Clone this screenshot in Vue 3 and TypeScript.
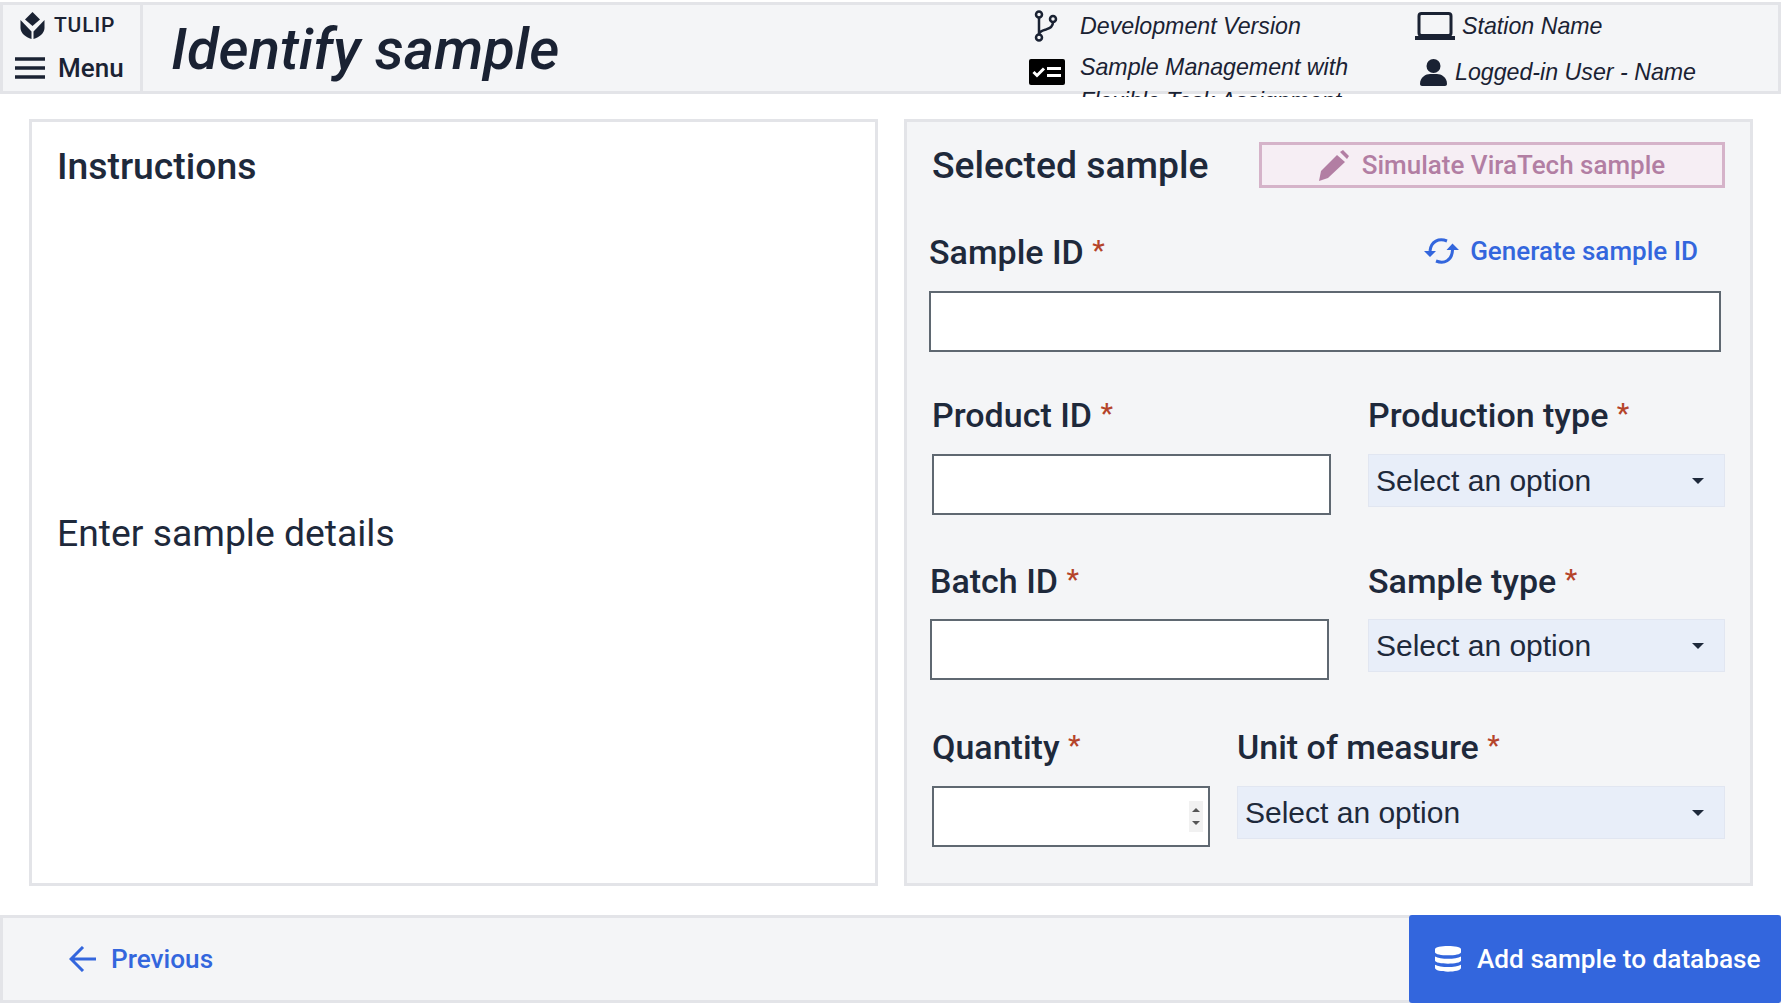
<template>
  <div class="page">
    <header class="top-bar">
      <div class="brand-cell">
        <div class="brand">
          <svg class="tulip" viewBox="0 0 24 27">
            <path d="M12 0l7.500 7.500L12 14 4.500 7.500z" />
            <path d="M0 8l11 11.500V27C5 25 0 21 0 16z" />
            <path d="M24 8L13 19.500V27c6-2 11-6 11-11z" />
          </svg>
          <span>TULIP</span>
        </div>
        <div class="menu">
          <svg class="burger" viewBox="0 0 30 22"><path d="M0 2h30M0 11h30M0 20h30" /></svg>
          <span>Menu</span>
        </div>
      </div>
      <h1 class="page-title">Identify sample</h1>
      <div class="meta">
        <div class="meta-col app-info">
          <div class="meta-row branch-row">
            <svg class="ico-branch" viewBox="0 0 24 32">
              <circle cx="5" cy="4.500" r="3" />
              <circle cx="5" cy="27.500" r="3" />
              <circle cx="19" cy="9" r="3" />
              <path d="M5 7.500v17M19 12c0 5-3 6-7 7.500-4 1-7 2-7 5" />
            </svg>
            <span>Development Version</span>
          </div>
          <div class="meta-row app-row">
            <svg class="ico-check" viewBox="0 0 36 26">
              <rect width="36" height="26" rx="2" />
              <path class="tick" d="M4.500 13l3.500 3.500 7-7" />
              <path class="bars" d="M18 9.500h14M18 16.500h14" />
            </svg>
            <span class="clip">Sample Management with Flexible Task Assignment</span>
          </div>
        </div>
        <div class="meta-col station">
          <div class="meta-row">
            <svg class="ico-laptop" viewBox="0 0 40 28">
              <rect x="4" y="1.500" width="32" height="22" rx="2.500" />
              <path d="M0 26h40" />
            </svg>
            <span>Station Name</span>
          </div>
          <div class="meta-row user">
            <svg class="ico-user" viewBox="0 0 27 27">
              <circle cx="13.500" cy="7" r="7" />
              <path d="M0 25c0-7 6-10 10-10h7c4 0 10 3 10 10 0 1-1 2-2 2H2c-1 0-2-1-2-2z" />
            </svg>
            <span>Logged-in User - Name</span>
          </div>
        </div>
      </div>
    </header>

    <main class="content">
      <section class="panel instructions">
        <h2>Instructions</h2>
        <p>Enter sample details</p>
      </section>

      <section class="panel form">
        <div class="form-head">
          <h2>Selected sample</h2>
          <button class="sim-btn">
            <svg viewBox="0 0 30 31"><path d="M0 31l2-10L18 5l8 7L9 28zM21 2l3-2 6 6-2 3z" /></svg>
            Simulate ViraTech sample
          </button>
        </div>

        <div class="id-head">
          <label class="field-label">Sample ID <i>*</i></label>
          <button class="gen-btn">
            <svg viewBox="0 0 36 26">
              <path d="M23 3C15 0 7 3 6 13" />
              <path d="M12 23c8 3 16 0 16.500-11" />
              <path class="head" d="M0 13h12l-6 6zM22.500 12H35l-6.500-6.500z" />
            </svg>
            Generate sample ID
          </button>
        </div>
        <input class="text-input wide" type="text" />

        <div class="row row-product">
          <div class="col-input">
            <label class="field-label">Product ID <i>*</i></label>
            <input class="text-input" type="text" />
          </div>
          <div class="col-select">
            <label class="field-label">Production type <i>*</i></label>
            <div class="select"><span>Select an option</span><b class="caret"></b></div>
          </div>
        </div>

        <div class="row row-batch">
          <div class="col-input">
            <label class="field-label">Batch ID <i>*</i></label>
            <input class="text-input" type="text" />
          </div>
          <div class="col-select">
            <label class="field-label">Sample type <i>*</i></label>
            <div class="select"><span>Select an option</span><b class="caret"></b></div>
          </div>
        </div>

        <div class="row row-qty">
          <div class="col-qty">
            <label class="field-label">Quantity <i>*</i></label>
            <div class="qty-box">
              <input class="text-input" type="text" />
              <div class="spin"><b class="up"></b><b class="down"></b></div>
            </div>
          </div>
          <div class="col-unit">
            <label class="field-label">Unit of measure <i>*</i></label>
            <div class="select"><span>Select an option</span><b class="caret"></b></div>
          </div>
        </div>
      </section>
    </main>

    <footer class="bottom-bar">
      <button class="prev-btn">
        <svg viewBox="0 0 28 26"><path d="M27 13H3M14 1L2 13l12 12" /></svg>
        Previous
      </button>
      <button class="add-btn">
        <svg viewBox="0 0 25 25">
          <path d="M0 3C0-1 25-1 25 3v3c0 4-25 4-25 0z" />
          <path d="M0 10c5 3 20 3 25 0v4c0 4-25 4-25 0z" />
          <path d="M0 18c5 3 20 3 25 0v3c0 5-25 5-25 0z" />
        </svg>
        Add sample to database
      </button>
    </footer>
  </div>
</template>

<script setup lang="ts">
</script>

<style>
body {
  margin: 0;
  background: #fff;
}
</style>

<style scoped>
.page {
  width: 1784px;
  height: 1004px;
  display: flex;
  flex-direction: column;
  font-family: Roboto, "Liberation Sans", sans-serif;
  color: #1e293b;
  overflow: hidden;
  padding-top: 2px;
  box-sizing: border-box;
}

.top-bar {
  width: 1781px;
  height: 92px;
  box-sizing: border-box;
  flex: none;
  display: flex;
  background: #f4f5f7;
  border: 3px solid #e3e4e8;
  color: #1a2233;
}

.brand-cell {
  flex: none;
  width: 125px;
  padding-left: 12px;
  border-right: 3px solid #e3e4e8;
}

.brand {
  display: flex;
  align-items: center;
  gap: 9px;
  height: 40px;
  padding-left: 5px;
  font-size: 21px;
  font-weight: 500;
  letter-spacing: 0.8px;
}

.tulip {
  width: 25px;
  height: 27px;
  fill: #1a2233;
}

.menu {
  display: flex;
  align-items: center;
  gap: 13px;
  height: 42px;
  margin-top: 2px;
  font-size: 26px;
  font-weight: 500;
}

.burger {
  width: 30px;
  height: 22px;
  fill: none;
  stroke: #1a2233;
  stroke-width: 3.500;
}

.page-title {
  margin: 0 0 0 28px;
  width: 858px;
  font-size: 58px;
  line-height: 88px;
  font-style: italic;
  font-weight: 500;
  white-space: nowrap;
}

.meta {
  display: flex;
  font-family: "Liberation Sans", Arial, sans-serif;
  font-style: italic;
  font-size: 23.200px;
  color: #1a2233;
  height: 100px;
}

.meta-col {
  display: flex;
  flex-direction: column;
}

.app-info {
  width: 386px;
}

.meta-row {
  display: flex;
  gap: 16px;
  align-items: center;
  height: 42px;
}

.branch-row {
  gap: 22px;
}

.app-row {
  gap: 15px;
}

.clip {
  width: 310px;
  height: 47px;
  margin-top: 3px;
  line-height: 34px;
  align-self: flex-start;
  overflow: hidden;
}

.ico-branch {
  width: 24px;
  height: 32px;
  margin-left: 5px;
  fill: none;
  stroke: #1a2233;
  stroke-width: 2.500;
}

.ico-check {
  width: 36px;
  height: 26px;
  flex: none;
  fill: #000;
  margin-top: 8px;
}

.ico-check .tick,
.ico-check .bars {
  fill: none;
  stroke: #fff;
  stroke-width: 3;
}

.ico-laptop {
  width: 40px;
  height: 28px;
  fill: none;
  stroke: #1a2233;
  stroke-width: 3;
}

.ico-laptop path {
  stroke-width: 4;
}

.station .meta-row {
  gap: 7px;
}

.station .user {
  gap: 8px;
  padding-left: 5px;
  margin-top: 4px;
}

.ico-user {
  width: 27px;
  height: 27px;
  fill: #1a2233;
}

.content {
  flex: none;
  display: flex;
  gap: 26px;
  padding: 25px 0 0 29px;
  height: 767px;
}

.panel {
  height: 767px;
  box-sizing: border-box;
  border: 3px solid #e3e4e8;
}

.panel h2 {
  margin: 0;
  font-size: 37.300px;
  font-weight: 500;
  line-height: 46px;
}

.instructions {
  width: 849px;
  padding: 21px 25px;
  display: flex;
  flex-direction: column;
}

.instructions p {
  margin: 321px 0 0;
  font-size: 37.300px;
  line-height: 46px;
}

.form {
  width: 849px;
  background: #f4f5f7;
  padding: 20px 25px 0 25px;
}

.form-head {
  display: flex;
  justify-content: space-between;
  align-items: center;
  height: 46px;
}

.sim-btn {
  width: 466px;
  height: 46px;
  box-sizing: border-box;
  display: flex;
  align-items: center;
  justify-content: center;
  gap: 13px;
  background: #f6eef4;
  border: 3px solid #d5b3c9;
  color: #b27ea3;
  font: 500 26px Roboto, sans-serif;
}

.sim-btn svg {
  width: 30px;
  height: 31px;
  fill: #b27ea3;
}

.id-head {
  display: flex;
  justify-content: space-between;
  align-items: center;
  margin: 43px 0 0 -3px;
  padding-right: 27px;
  height: 40px;
}

.field-label {
  display: block;
  font-size: 34px;
  font-weight: 500;
  line-height: 40px;
  white-space: nowrap;
}

.field-label i {
  font-style: normal;
  color: #b5442a;
  font-size: 28px;
  vertical-align: 4px;
}

.gen-btn {
  display: flex;
  align-items: center;
  gap: 10px;
  background: none;
  border: 0;
  padding: 0;
  color: #3366dd;
  font: 500 26px Roboto, sans-serif;
}

.gen-btn svg {
  width: 36px;
  height: 26px;
  fill: none;
  stroke: #3366dd;
  stroke-width: 3;
}

.gen-btn .head {
  fill: #3366dd;
  stroke: none;
}

.text-input {
  display: block;
  width: 100%;
  height: 61px;
  box-sizing: border-box;
  background: #fff;
  border: 2px solid #5f6871;
  border-radius: 0;
  outline: none;
  padding: 0;
}

.wide {
  width: 792px;
  margin: 20px 0 0 -3px;
}

.row {
  display: flex;
  justify-content: space-between;
}

.row-product {
  margin-top: 42px;
}

.row-batch {
  margin-top: 45px;
}

.row-batch .col-input {
  margin-left: -2px;
}

.row-qty {
  margin-top: 46px;
}

.col-input {
  width: 399px;
}

.col-select {
  width: 357px;
}

.col-qty {
  width: 278px;
}

.col-unit {
  width: 488px;
}

.row .field-label {
  margin-bottom: 19px;
}

.row-batch .field-label {
  margin-bottom: 18px;
}

.select {
  display: flex;
  align-items: center;
  justify-content: space-between;
  height: 53px;
  padding: 0 20px 0 7px;
  box-sizing: border-box;
  background: #e8eef9;
  border: 1px solid #e1e6f1;
  font-family: "Liberation Sans", Arial, sans-serif;
  font-size: 30px;
  color: #1e293b;
}

.caret {
  border-left: 6px solid transparent;
  border-right: 6px solid transparent;
  border-top: 6px solid #1e293b;
}

.qty-box {
  position: relative;
}

.spin {
  position: absolute;
  top: 15px;
  right: 7px;
  width: 14px;
  height: 31px;
  background: #f1f1f1;
  display: flex;
  flex-direction: column;
  align-items: center;
  justify-content: center;
  gap: 9px;
}

.spin b {
  border-left: 4px solid transparent;
  border-right: 4px solid transparent;
}

.spin .up {
  border-bottom: 4px solid #555;
}

.spin .down {
  border-top: 4px solid #555;
}

.bottom-bar {
  width: 1781px;
  height: 88px;
  margin-top: 29px;
  box-sizing: border-box;
  flex: none;
  display: flex;
  justify-content: space-between;
  align-items: center;
  background: #f4f5f7;
  border: 3px solid #e3e4e8;
  border-right: 0;
}

.prev-btn {
  display: flex;
  align-items: center;
  gap: 14px;
  margin-left: 66px;
  background: none;
  border: 0;
  padding: 0;
  color: #3366dd;
  font: 500 26.200px Roboto, sans-serif;
}

.prev-btn svg {
  width: 28px;
  height: 26px;
  fill: none;
  stroke: #3366dd;
  stroke-width: 3;
}

.add-btn {
  width: 372px;
  height: 88px;
  margin: -3px 0;
  display: flex;
  align-items: center;
  gap: 16px;
  padding: 0 0 0 26px;
  box-sizing: border-box;
  background: #3366dd;
  border: 0;
  border-radius: 3px;
  color: #fff;
  font: 500 26.200px Roboto, sans-serif;
  white-space: nowrap;
}

.add-btn svg {
  width: 26px;
  height: 26px;
  fill: #fff;
}
</style>
